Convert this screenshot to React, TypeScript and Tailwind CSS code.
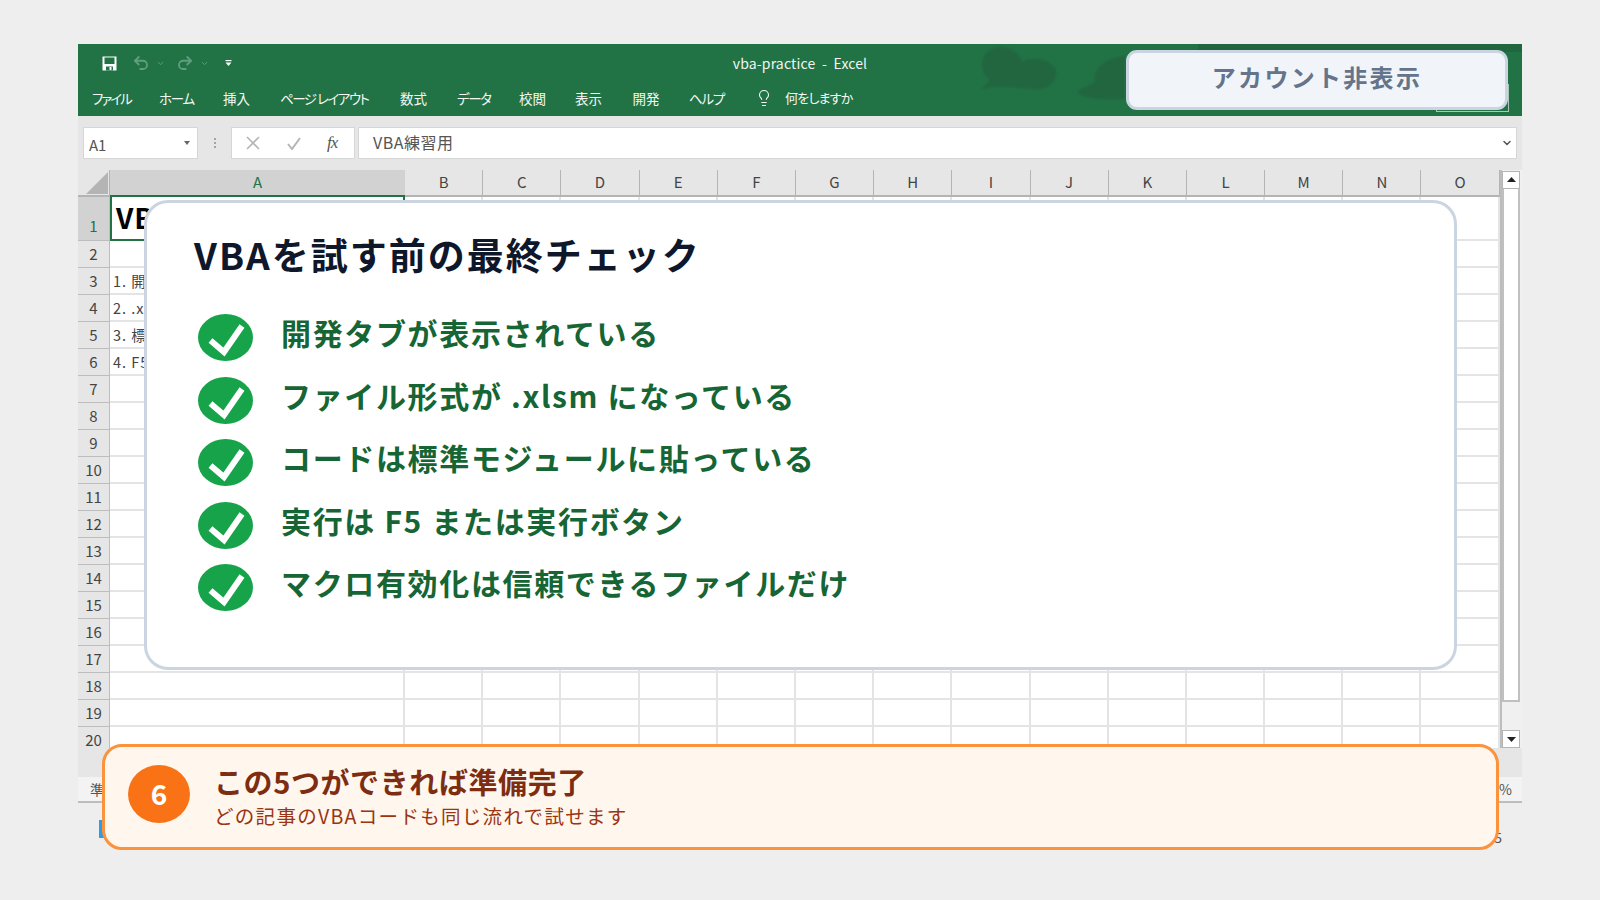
import { Lightbulb, Undo2, Redo2, ChevronDown } from "lucide-react";

const JP = "font-['Noto_Sans_CJK_JP','Noto_Sans',sans-serif]";

const menu = [
  ["ファイル", "w-[67px]", "tracking-[-2px]"],
  ["ホーム", "w-[64px]", "tracking-[-1.2px]"],
  ["挿入", "w-[57px]", "tracking-[0px]"],
  ["ページ レイアウト", "w-[120px]", "tracking-[-1.5px]"],
  ["数式", "w-[57px]", "tracking-[0px]"],
  ["データ", "w-[62px]", "tracking-[-1.4px]"],
  ["校閲", "w-[56px]", "tracking-[0px]"],
  ["表示", "w-[57.5px]", "tracking-[0px]"],
  ["開発", "w-[56.5px]", "tracking-[0px]"],
  ["ヘルプ", "w-[66px]", "tracking-[-1.2px]"],
];

const cols = ["B", "C", "D", "E", "F", "G", "H", "I", "J", "K", "L", "M", "N", "O"];
const rows = Array.from({ length: 20 }, (_, i) => i + 1);
const cellText: Record<number, string> = {
  3: "1. 開発タブを表示",
  4: "2. .xlsmで保存",
  5: "3. 標準モジュールに貼付け",
  6: "4. F5で実行",
};

const checks = [
  "開発タブが表示されている",
  "ファイル形式が .xlsm になっている",
  "コードは標準モジュールに貼っている",
  "実行は F5 または実行ボタン",
  "マクロ有効化は信頼できるファイルだけ",
];

function CheckBadge() {
  return (
    <svg width="55" height="47" viewBox="0 0 55 47" className="shrink-0">
      <ellipse cx="27.5" cy="23.5" rx="27.5" ry="23.5" fill="#16a34a" />
      <polyline points="12.5,26.5 26,38 44,12" fill="none" stroke="#ffffff" strokeWidth="6" />
    </svg>
  );
}

function SaveIcon() {
  return (
    <svg width="15" height="15" viewBox="0 0 15 15">
      <path d="M0.5 0.5H14.5V14.5H0.5Z" fill="#ffffff" />
      <rect x="2.5" y="1.5" width="10" height="6.5" fill="#217346" />
      <rect x="4" y="10.5" width="7" height="4" fill="#217346" />
      <rect x="7.5" y="11" width="2" height="3" fill="#ffffff" />
    </svg>
  );
}

export default function App() {
  return (
    <div className={`relative w-[1600px] h-[900px] bg-[#eeeeee] overflow-hidden pt-[44px] pl-[78px] ${JP}`}>
      <div className="w-[1444px] flex flex-col">
        {/* Title bar */}
        <div className="relative h-[72px] bg-[#217346] text-white flex flex-col">
          <svg className="absolute left-[872px] top-0 blur-[1px]" width="180" height="60" viewBox="0 0 180 60">
            <path d="M30 46C36 40 42 36 38 34C28 26 30 4 50 3C62 3 70 10 72 18C80 12 100 14 106 26C108 36 100 44 90 45C72 46 50 38 30 46Z" fill="#226640" />
            <path d="M175 12C155 14 143 24 145 38L127 47C132 55 150 56 175 55Z" fill="#226640" />
          </svg>
          <div className="absolute left-[1120px] right-0 top-0 h-[8px] bg-[#226640]" />
          <div className="absolute left-[1358px] top-[40px] w-[73px] h-[28px] border border-[#a9c9b6]" />

          <div className="relative grid grid-cols-[1fr_auto_1fr] h-[38px] items-center">
            <div className="flex items-center pl-[24px]">
              <SaveIcon />
              <Undo2 className="ml-[15px] text-[#5f9f7e]" size={18} strokeWidth={2.4} />
              <ChevronDown className="ml-[6px] text-[#5f9f7e]" size={9} strokeWidth={2.4} />
              <Redo2 className="ml-[10.5px] text-[#5f9f7e]" size={18} strokeWidth={2.4} />
              <ChevronDown className="ml-[6px] text-[#5f9f7e]" size={9} strokeWidth={2.4} />
              <svg className="ml-[16px]" width="7" height="7" viewBox="0 0 7 7">
                <rect x="0.5" y="0" width="6" height="1.2" fill="#fff" />
                <path d="M0.5 2.5H6.5L3.5 6Z" fill="#fff" />
              </svg>
            </div>
            <div className="text-[14px] tracking-[0.15px] text-[#f0f5f2] pt-[1px] whitespace-pre">vba-practice{"  -  "}Excel</div>
            <div />
          </div>
          <div className="relative flex items-center h-[34px] pl-[14px] pb-[2px] text-[13.5px] text-[#f4f8f5]">
            {menu.map(([t, w, k]) => (
              <div key={t} className={`${w} ${k} whitespace-nowrap [font-feature-settings:'palt']`}>
                {t}
              </div>
            ))}
            <Lightbulb className="w-[18px] h-[20px] mr-[12px]" strokeWidth={1.5} />
            <div className="text-[13px] tracking-[-0.8px] [font-feature-settings:'palt']">何をしますか</div>
          </div>
        </div>

        {/* Formula bar */}
        <div className="h-[54px] bg-[#e6e6e6] flex pt-[11px] pl-[5px] pr-[5px] text-[#555555]">
          <div className="w-[115px] h-[32px] bg-white border border-[#d6d6d6] flex items-center pl-[5px] pr-[7px] justify-between">
            <span className="text-[15px] pt-[4px] tracking-[-0.2px]">A1</span>
            <svg width="6" height="4" viewBox="0 0 6 4"><path d="M0 0H6L3 4Z" fill="#666" /></svg>
          </div>
          <div className="w-[33px] h-[32px] flex flex-col gap-[2px] items-center justify-center">
            <span className="w-[2px] h-[2px] bg-[#a5a5a5]" />
            <span className="w-[2px] h-[2px] bg-[#a5a5a5]" />
            <span className="w-[2px] h-[2px] bg-[#a5a5a5]" />
          </div>
          <div className="w-[124px] h-[32px] bg-white border border-[#d6d6d6] flex items-center pl-[14px]">
            <svg width="14" height="14" viewBox="0 0 14 14"><path d="M1 1L13 13M13 1L1 13" stroke="#b5b5b5" strokeWidth="1.6" /></svg>
            <svg className="ml-[27px]" width="14" height="14" viewBox="0 0 14 14"><path d="M1 8L5 13L13 2" fill="none" stroke="#b5b5b5" strokeWidth="2" /></svg>
            <span className="ml-[26px] font-['Liberation_Serif',serif] italic text-[#555555] text-[17px] tracking-[-1px]">fx</span>
          </div>
          <div className="ml-[3px] flex-1 h-[32px] bg-white border border-[#d6d6d6] flex items-center justify-between pl-[14px] pr-[3px]">
            <span className="text-[16px] tracking-[0.5px] pb-[2px]">VBA練習用</span>
            <ChevronDown className="text-[#555555]" size={12} strokeWidth={3} />
          </div>
        </div>

        {/* Sheet */}
        <div className="flex h-[578px] overflow-hidden bg-[#e6e6e6]">
          <div className="w-[1422px] h-[578px] overflow-hidden bg-white grid grid-cols-[32px_295px_repeat(14,78.2px)] auto-rows-[27px] [grid-template-rows:27px_44px] text-[15px] text-[#444444]">
            <div className="bg-[#e6e6e6] border-r border-b-2 border-[#b4b4b4] flex items-end justify-end pr-[1px] pb-[1px]">
              <svg width="22" height="22" viewBox="0 0 22 22"><path d="M22 0V22H0Z" fill="#b4b4b4" /></svg>
            </div>
            <div className="bg-[#d2d2d2] border-b-2 border-[#217346] flex items-center justify-center text-[#217346]">A</div>
            {cols.map((c) => (
              <div key={c} className="bg-[#e6e6e6] border-r border-b-2 border-[#b4b4b4] flex items-center justify-center">
                {c}
              </div>
            ))}
            {rows.map((r) => (
              <div key={r} className="contents">
                <div
                  className={`border-b border-[#bdbdbd] border-r flex justify-center ${
                    r === 1 ? "bg-[#d2d2d2] text-[#217346] items-end pb-[3px]" : "bg-[#e6e6e6] items-center"
                  }`}
                >
                  {r}
                </div>
                <div
                  className={`whitespace-nowrap overflow-hidden flex items-center ${
                    r === 1
                      ? "border-2 border-[#217346] border-t-0 text-[28px] tracking-[1px] font-bold text-black pl-[4px] pb-[2px]"
                      : "border-b-2 border-r-2 border-[#e4e4e4] pl-[3px] text-[14.5px] tracking-[1px]"
                  }`}
                >
                  {r === 1 ? "VBA練習用" : cellText[r] ?? ""}
                </div>
                {cols.map((c) => (
                  <div key={c} className="border-b-2 border-r-2 border-[#e4e4e4]" />
                ))}
              </div>
            ))}
          </div>
          {/* Scrollbar */}
          <div className="w-[22px] h-[578px] border-l-2 border-[#bdbdbd] bg-[#f0f0f0] flex flex-col pt-[1px] pr-[2px]">
            <div className="h-[18px] bg-white border border-[#b5b5b5] flex items-center justify-center">
              <svg width="9" height="5" viewBox="0 0 9 5"><path d="M4.5 0L9 5H0Z" fill="#222" /></svg>
            </div>
            <div className="h-[514px] bg-white border-2 border-t-0 border-[#c0c0c0]" />
            <div className="mt-[28px] h-[18px] bg-white border border-[#b5b5b5] flex items-center justify-center">
              <svg width="9" height="5" viewBox="0 0 9 5"><path d="M0 0H9L4.5 5Z" fill="#222" /></svg>
            </div>
          </div>
        </div>

        {/* Sheet tab band */}
        <div className="h-[29px] bg-[#e6e6e6]" />
        {/* Status bar */}
        <div className="h-[26px] bg-[#f3f3f3] border-b-2 border-[#bdbdbd] flex items-center justify-between pl-[12px] pr-[10px] text-[14px] text-[#555555]">
          <span>準備完了</span>
          <span>%</span>
        </div>

        {/* Taskbar remnant */}
        <div className="mt-[17px] h-[18px] flex justify-between pl-[21px] pr-[20px]">
          <div className="w-[10px] h-[18px] bg-[#2e9be6]" />
          <span className="text-[14px] leading-[18px] text-[#555555] pt-[8px]">5</span>
        </div>
      </div>

      {/* Account-hiding plate */}
      <div className="absolute left-[1126px] top-[50px] w-[382px] h-[60px] bg-[#f1f5f9] border-[3px] border-[#cbd5e1] rounded-[11px] flex items-center justify-center pb-[7px] text-[24px] font-bold text-[#64748b] tracking-[2.3px]">
        アカウント非表示
      </div>

      {/* Checklist card */}
      <div className="absolute left-[144px] top-[200px] w-[1313px] h-[470px] bg-white border-[3px] border-[#cbd5e1] rounded-[24px] pl-[47px] pt-[25px]">
        <div className="text-[37px] leading-[52px] font-bold text-[#0f172a] tracking-[2px]">VBAを試す前の最終チェック</div>
        <div className="mt-[34px] pl-[4px] flex flex-col">
          {checks.map((c) => (
            <div key={c} className="h-[62.5px] flex items-start gap-[28px]">
              <CheckBadge />
              <span className="text-[30px] leading-[36px] font-bold text-[#166534] tracking-[1.65px] whitespace-nowrap">{c}</span>
            </div>
          ))}
        </div>
      </div>

      {/* Summary banner */}
      <div className="absolute left-[102px] top-[744px] w-[1397px] h-[106px] bg-[#fff7ed] border-[3px] border-[#fb923c] rounded-[20px] flex items-center pl-[23px] pb-[6px]">
        <div className="w-[62px] h-[58px] rounded-[50%] bg-[#f97316] flex items-center justify-center text-white font-bold text-[28px] pb-[2px]">6</div>
        <div className="ml-[24px] flex flex-col pt-[6px]">
          <div className="text-[29px] leading-[37px] font-bold text-[#7c2d12] tracking-[0.6px]">この5つができれば準備完了</div>
          <div className="text-[19.5px] leading-[32px] text-[#9a3412] tracking-[1.3px]">どの記事のVBAコードも同じ流れで試せます</div>
        </div>
      </div>
    </div>
  );
}
